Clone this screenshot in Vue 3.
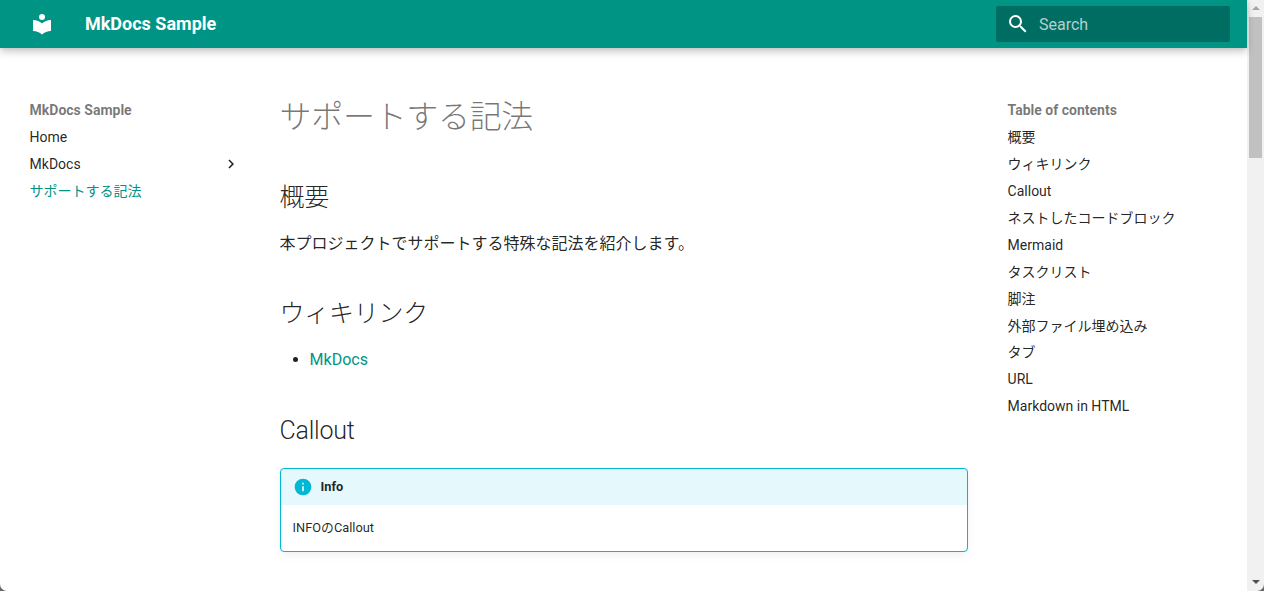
<script setup>
const toc = ['概要','ウィキリンク','Callout','ネストしたコードブロック','Mermaid','タスクリスト','脚注','外部ファイル埋め込み','タブ','URL','Markdown in HTML']
</script>

<template>
  <div class="window">
    <div class="page">
      <header class="header">
        <svg class="logo" viewBox="0 0 24 24"><path d="M12 8a3 3 0 0 0 3-3 3 3 0 0 0-3-3 3 3 0 0 0-3 3 3 3 0 0 0 3 3m0 3.54C9.64 9.35 6.5 8 3 8v11c3.5 0 6.64 1.35 9 3.54 2.36-2.19 5.5-3.54 9-3.54V8c-3.5 0-6.64 1.35-9 3.54Z"/></svg>
        <div class="site-title">MkDocs Sample</div>
        <div class="search">
          <svg class="search-icon" viewBox="0 0 24 24"><path d="M9.5 3A6.5 6.5 0 0 1 16 9.5c0 1.61-.59 3.09-1.56 4.23l.27.27h.79l5 5-1.5 1.5-5-5v-.79l-.27-.27A6.516 6.516 0 0 1 9.5 16 6.5 6.5 0 0 1 3 9.5 6.5 6.5 0 0 1 9.5 3m0 2C7 5 5 7 5 9.5S7 14 9.5 14 14 12 14 9.5 12 5 9.5 5Z"/></svg>
          <span>Search</span>
        </div>
      </header>
      <div class="grid">
        <nav class="nav">
          <div class="side-title">MkDocs Sample</div>
          <a class="side-link">Home</a>
          <a class="side-link with-chevron">MkDocs
            <svg class="chevron" viewBox="0 0 24 24"><path d="M8.59 16.58 13.17 12 8.59 7.41 10 6l6 6-6 6-1.41-1.42Z"/></svg>
          </a>
          <a class="side-link active">サポートする記法</a>
        </nav>
        <main class="content">
          <h1>サポートする記法</h1>
          <h2>概要</h2>
          <p>本プロジェクトでサポートする特殊な記法を紹介します。</p>
          <h2>ウィキリンク</h2>
          <ul><li><a>MkDocs</a></li></ul>
          <h2>Callout</h2>
          <div class="admonition">
            <div class="admonition-title">
              <svg class="info" viewBox="0 0 24 24"><path d="M13 9h-2V7h2m0 10h-2v-6h2m-1-9A10 10 0 0 0 2 12a10 10 0 0 0 10 10 10 10 0 0 0 10-10A10 10 0 0 0 12 2Z"/></svg>
              Info
            </div>
            <p class="admonition-body">INFOのCallout</p>
          </div>
        </main>
        <nav class="toc">
          <div class="side-title">Table of contents</div>
          <a v-for="t in toc" :key="t" class="side-link">{{ t }}</a>
        </nav>
      </div>
    </div>
    <div class="scrollbar">
      <div class="arrow up"></div>
      <div class="thumb"></div>
      <div class="spacer"></div>
      <div class="arrow down"></div>
    </div>
    <i class="corner left"></i>
    <i class="corner right"></i>
  </div>
</template>

<style>
html, body { margin: 0; overflow: hidden; }
</style>

<style scoped>
.window {
  position: relative;
  display: flex;
  width: 1264px;
  height: 591px;
  overflow: hidden;
  background: #fff;
  color: rgba(0,0,0,.87);
  font-family: Roboto, "Noto Sans CJK JP", sans-serif;
}
.page { flex: 1; min-width: 0; }
.header {
  display: flex;
  align-items: center;
  height: 48px;
  background: #009485;
  color: #fff;
  box-shadow: 0 0 4px rgba(0,0,0,.1), 0 4px 8px rgba(0,0,0,.2);
  position: relative;
}
.logo { width: 24px; height: 24px; margin-left: 30px; fill: #fff; flex: none; }
.site-title { margin-left: 31px; padding-bottom: 2px; font-size: 18px; font-weight: 700; flex: 1; }
.search {
  display: flex;
  align-items: center;
  width: 234px;
  height: 36px;
  margin-right: 17px;
  border-radius: 2px;
  background: rgba(0,0,0,.26);
  font-size: 16px;
  color: rgba(255,255,255,.7);
}
.search-icon { width: 24px; height: 24px; margin-left: 10px; margin-right: 9px; fill: #fff; }
.grid { display: flex; padding-left: 29.6px; }
.nav { width: 210px; flex: none; margin-right: 40px; padding-top: 52.92px; }
.side-title { font-size: 14px; font-weight: 700; line-height: 18.2px; color: rgba(0,0,0,.54); }
.side-link { display: block; font-size: 14px; line-height: 18.2px; margin-top: 8.75px; }
.with-chevron { position: relative; }
.chevron { position: absolute; right: 0; top: .5px; width: 18px; height: 18px; fill: rgba(0,0,0,.87); }
.active { color: #009485; }
.content { width: 688px; flex: none; padding-top: 49px; }
h1 { margin: 0 0 41px; font-size: 32px; font-weight: 300; line-height: 41.6px; color: rgba(0,0,0,.54); letter-spacing: -.01em; }
h2 { margin: 40px 0 16px; font-size: 25px; font-weight: 300; line-height: 35px; letter-spacing: -.01em; }
p { margin: 16px 0; font-size: 16px; line-height: 25.6px; }
ul { margin: 16px 0 40px; padding: 0 0 0 30px; font-size: 16px; line-height: 25.6px; }
li a { color: #009485; }
.admonition {
  margin-top: 20.2px;
  border: 1px solid #00b8d4;
  border-radius: 4px;
  box-shadow: 0 4px 10px rgba(0,0,0,.05), 0 0 1px rgba(0,0,0,.1);
  font-size: 12.8px;
  overflow: hidden;
}
.admonition-title {
  display: flex;
  align-items: center;
  height: 36px;
  padding-left: 12px;
  background: rgba(0,184,212,.1);
  font-weight: 700;
  line-height: 20px;
}
.info { width: 20px; height: 20px; fill: #00b8d4; margin-right: 8px; }
.admonition-body { margin: 0; padding: 13px 12px 13px; font-size: 12.8px; line-height: 20px; }
.toc { margin-left: 40px; flex: none; width: 220px; padding-top: 52.92px; }
.scrollbar {
  width: 17px;
  flex: none;
  background: #f1f1f1;
  display: flex;
  flex-direction: column;
  align-items: center;
}
.arrow { width: 17px; height: 17px; flex: none; position: relative; }
.arrow::after { content: ""; position: absolute; left: 5px; border-left: 4px solid transparent; border-right: 4px solid transparent; }
.up::after { top: 6px; border-bottom: 4px solid #a3a3a3; }
.down::after { top: 6px; border-top: 4px solid #505050; }
.thumb { width: 13px; height: 141px; background: #c1c1c1; flex: none; }
.spacer { flex: 1; }
.corner { position: absolute; bottom: 0; width: 7px; height: 7px; overflow: hidden; }
.corner::before { content: ""; position: absolute; width: 14px; height: 14px; border-radius: 50%; box-shadow: 0 0 0 8px #6e6468; }
.corner.left { left: 0; }
.corner.left::before { left: 0; bottom: 0; }
.corner.right { right: 0; }
.corner.right::before { right: 0; bottom: 0; }
</style>
